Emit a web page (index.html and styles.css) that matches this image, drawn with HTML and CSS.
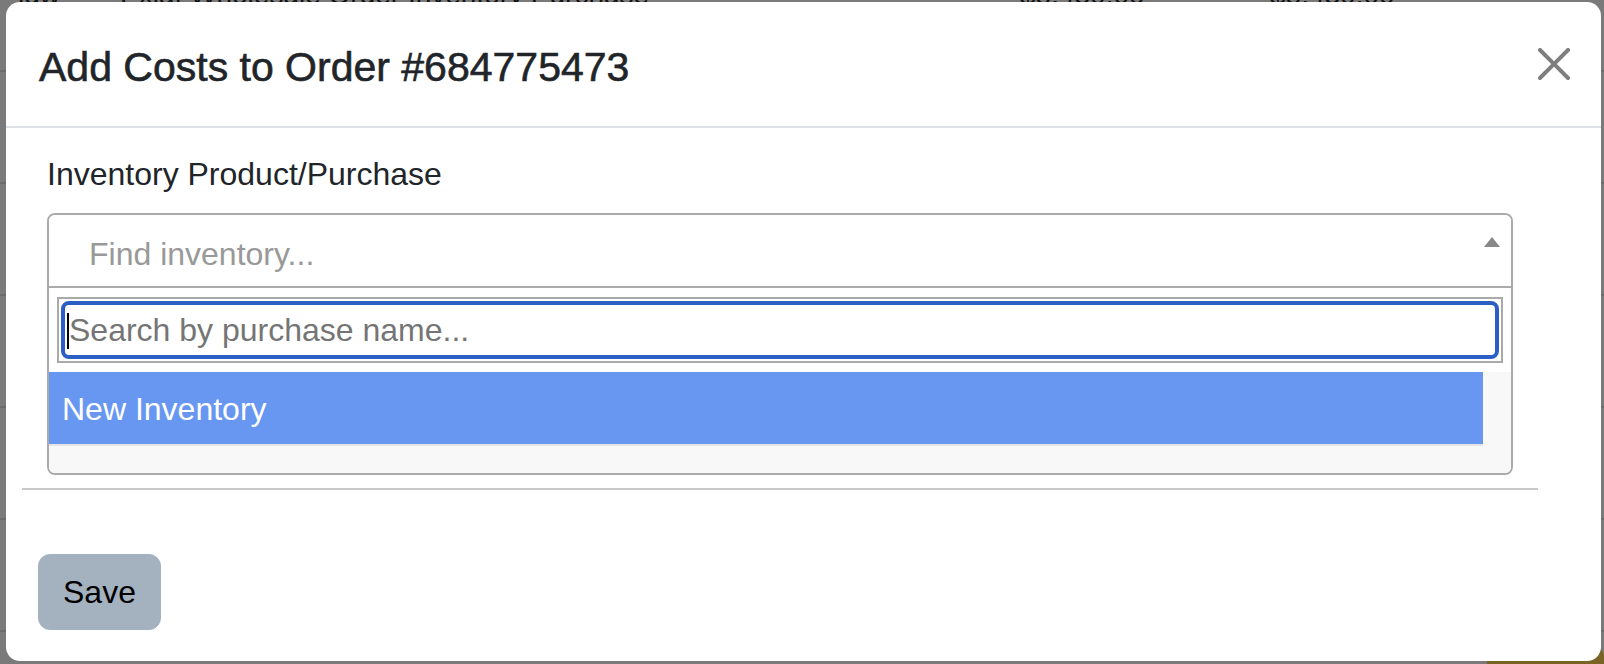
FILE: index.html
```html
<!DOCTYPE html>
<html lang="en">
<head>
<meta charset="utf-8">
<title>Add Costs to Order</title>
<link rel="stylesheet" href="styles.css">
</head>
<body>
  <div class="page">
    <div class="row row-top"><span class="cell c1">ldw</span><span class="cell c2">Exiaf Wholesale Order Inventory Purchase</span><span class="cell c3">$8,430.00</span><span class="cell c4">$8,430.00</span></div>
    <div class="row"></div>
    <div class="row"></div>
    <div class="row"></div>
    <div class="row"></div>
    <div class="row"></div>
    <div class="row row-bottom"><span class="cell c1">Order</span><span class="cell c2">Inventory Products Received</span><span class="cell c3">$8,610.40</span><span class="cell c4">$8,610.40</span><span class="gold-btn"></span></div>
  </div>

  <div class="backdrop"></div>

  <div class="modal">
    <div class="modal-header">
      <h5 class="modal-title">Add Costs to Order #684775473</h5>
      <button class="btn-close" type="button" aria-label="Close">
        <svg viewBox="0 0 16 16" width="32" height="32"><path d="M.293.293a1 1 0 0 1 1.414 0L8 6.586 14.293.293a1 1 0 1 1 1.414 1.414L9.414 8l6.293 6.293a1 1 0 0 1-1.414 1.414L8 9.414l-6.293 6.293a1 1 0 0 1-1.414-1.414L6.586 8 .293 1.707a1 1 0 0 1 0-1.414"/></svg>
      </button>
    </div>
    <div class="modal-body">
      <label class="form-label">Inventory Product/Purchase</label>
      <div class="chosen">
        <div class="chosen-single">
          <span class="chosen-placeholder">Find inventory...</span>
          <span class="chosen-arrow"></span>
        </div>
        <div class="chosen-drop">
          <div class="chosen-search">
            <div class="search-box">
              <div class="search-input"><span class="caret"></span><span class="search-placeholder">Search by purchase name...</span></div>
            </div>
          </div>
          <ul class="chosen-results">
            <li class="result active">New Inventory</li>
          </ul>
        </div>
      </div>
      <div class="divider"></div>
    </div>
    <div class="modal-footer">
      <button class="btn-save" type="button">Save</button>
    </div>
  </div>
</body>
</html>
```

FILE: styles.css
```css
* { box-sizing: border-box; }

html, body {
  margin: 0;
  padding: 0;
  width: 1604px;
  height: 664px;
  overflow: hidden;
}

body {
  font-family: "Liberation Sans", Arial, sans-serif;
  background: #f5f5f5;
  color: #212529;
}

/* background page (behind the backdrop) */
.page {
  margin-top: -40px;
}

.row {
  display: flex;
  height: 112px;
  padding-top: 18px;
  border-bottom: 2px solid #d9d9d9;
  font-size: 28px;
  line-height: 34px;
  color: #222;
}

.row-bottom {
  padding-top: 26px;
}

.cell { display: block; }
.c1 { width: 120px; padding-left: 18px; }
.c2 { width: 900px; }
.c3 { width: 250px; }
.c4 { width: 256px; }

.gold-btn {
  margin-top: -12px;
  height: 60px;
  width: 120px;
  background: #f2c94c;
  border-radius: 10px;
}

.backdrop {
  position: fixed;
  inset: 0;
  background: rgba(0, 0, 0, 0.5);
}

/* modal */
.modal {
  position: absolute;
  left: 6px;
  top: 2px;
  width: 1595px;
  height: 659px;
  background: #fff;
  border-radius: 14px;
  display: flex;
  flex-direction: column;
}

.modal-header {
  height: 126px;
  border-bottom: 2px solid #dee2e6;
  display: flex;
  align-items: flex-start;
  justify-content: space-between;
  padding: 0 31px 0 33px;
}

.modal-title {
  margin: 35px 0 0 0;
  font-size: 41px;
  line-height: 60px;
  font-weight: 400;
  color: #212529;
  -webkit-text-stroke: 0.6px #212529;
}

.btn-close {
  margin-top: 46px;
  width: 32px;
  height: 32px;
  padding: 0;
  border: 0;
  background: transparent;
  display: block;
}

.btn-close svg {
  display: block;
  fill: #000;
  opacity: 0.5;
}

.modal-body {
  padding: 22px 88px 0 41px;
}

.form-label {
  display: block;
  font-size: 32px;
  line-height: 48px;
  margin-bottom: 15px;
  color: #212529;
}

/* chosen-like select */
.chosen {
  border: 2px solid #aaa;
  border-radius: 8px;
  overflow: hidden;
  font-size: 32px;
}

.chosen-single {
  height: 71px;
  display: flex;
  align-items: flex-start;
  justify-content: space-between;
  padding: 8px 11px 0 40px;
  background: #fff;
}

.chosen-placeholder {
  line-height: 63px;
  color: #999;
}

.chosen-arrow {
  margin-top: 14px;
  width: 0;
  height: 0;
  border-left: 8px solid transparent;
  border-right: 8px solid transparent;
  border-bottom: 10px solid #888;
}

.chosen-drop {
  border-top: 2px solid #aaa;
  background: #fff;
}

.chosen-search {
  padding: 9px 8px;
}

.search-box {
  border: 2px solid #aaa;
  padding: 2px;
}

.search-input {
  display: flex;
  align-items: flex-start;
  height: 58px;
  border: 4px solid #2b5fc6;
  border-radius: 8px;
  background: #fff;
}

.search-input .caret {
  display: block;
  width: 2px;
  height: 36px;
  background: #000;
  margin: 8px 0 0 2px;
}

.search-placeholder {
  display: block;
  color: #757575;
  line-height: 48px;
  padding-top: 1px;
}

.chosen-results {
  list-style: none;
  margin: 0;
  padding: 0 28px 27px 0;
  background: #f8f8f8;
}

.result {
  height: 74px;
  padding: 2px 0 0 13px;
  line-height: 70px;
  border-bottom: 2px solid #e5e5e5;
}

.result.active {
  background: #6897f1;
  color: #fff;
}

.divider {
  height: 2px;
  background: #c8c8c8;
  margin: 13px -25px 0 -25px;
}

.modal-footer {
  padding: 64px 32px 31px 32px;
}

.btn-save {
  font-family: "Liberation Sans", Arial, sans-serif;
  font-size: 32px;
  line-height: 48px;
  padding: 13px 24px;
  border: 1px solid #a4b1bf;
  background: #a4b1bf;
  color: #000;
  border-radius: 12px;
  display: block;
}
```
